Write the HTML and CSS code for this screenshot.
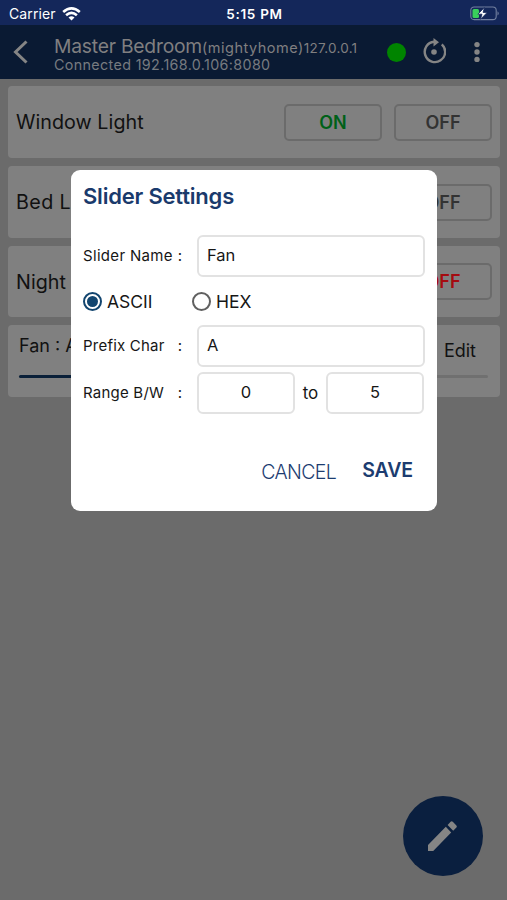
FILE: index.html
```html
<!DOCTYPE html>
<html lang="en">
<head>
<meta charset="utf-8">
<title>Master Bedroom</title>
<link rel="stylesheet" href="styles.css">
</head>
<body>
<div class="screen">
  <div class="status">
    <div class="carrier"><span>Carrier</span>
      <svg width="19" height="14" viewBox="0 0 19 14" fill="none" stroke="#fff" stroke-width="2.6"><path d="M1.2 5.1Q9.5-2.2 17.8 5.1M4.1 8.3Q9.5 3.6 14.9 8.3"/><path d="M6.5 10.6Q9.5 8.1 12.5 10.6L9.5 13.6Z" fill="#fff" stroke="none"/></svg>
    </div>
    <div class="clock">5:15 PM</div>
    <svg class="battery" width="31" height="15" viewBox="0 0 31 15"><rect x="1.8" y="1" width="25.4" height="12.6" rx="3.4" fill="none" stroke="#7380a0" stroke-width="1.1"/><rect x="3.5" y="3" width="6.5" height="9" rx="1.5" fill="#39cf5b"/><path d="M28.5 5.2Q31 7.4 28.5 9.6Z" fill="#7380a0"/><path d="M15.4 1.5L8.9 8.2H13L11.5 13.3L18.2 6.4H14.1Z" fill="#fff" stroke="#14275a" stroke-width=".8"/></svg>
  </div>
  <header class="header">
    <svg class="back" width="16" height="26" viewBox="0 0 16 26" fill="none" stroke="#858585" stroke-width="3"><path d="M13.5 2.5L2.5 13L13.5 23.5"/></svg>
    <div class="heading">
      <div class="room"><span class="name">Master Bedroom</span><span class="home">(mightyhome)</span><span class="ip">127.0.0.1</span></div>
      <div class="connection">Connected 192.168.0.106:8080</div>
    </div>
    <span class="online"></span>
    <svg class="reload" width="24" height="26" viewBox="0 0 24 26"><path d="M19.8 6.3A10.2 10.2 0 1 1 12 3.7" fill="none" stroke="#858585" stroke-width="2.4"/><path d="M11.5 0L17 4.2L11.5 8.4Z" fill="#858585"/><circle cx="12" cy="14" r="2.8" fill="#858585"/></svg>
    <svg class="more" width="6" height="22" viewBox="0 0 6 22" fill="#858585"><circle cx="3" cy="3.6" r="2.7"/><circle cx="3" cy="11" r="2.7"/><circle cx="3" cy="18.4" r="2.7"/></svg>
  </header>
  <main class="devices">
    <section class="card"><span class="device">Window Light</span><button class="switch on">ON</button><button class="switch">OFF</button></section>
    <section class="card"><span class="device bed">Bed Light</span><button class="switch">ON</button><button class="switch">OFF</button></section>
    <section class="card"><span class="device">Night Light</span><button class="switch">ON</button><button class="switch off">OFF</button></section>
    <section class="card slider">
      <div class="slider-head"><span class="slider-name">Fan : A</span><span class="edit">Edit</span></div>
      <div class="track"><div class="fill"></div></div>
    </section>
  </main>
  <div class="fab"><svg width="32" height="32" viewBox="0 0 32 32" fill="#858585"><path d="M1 31V25L18.8 6.8L24.2 12.4L6.2 31ZM20.6 5L23.6 1.8Q24.6 .8 25.8 1.8L29.4 5.4Q30.4 6.6 29.4 7.6L26.2 10.8Z"/></svg></div>
  <div class="dialog">
    <h1 class="title">Slider Settings</h1>
    <div class="row"><div class="label"><span class="l1">Slider Name</span><span>:</span></div><div class="field">Fan</div></div>
    <div class="radios">
      <span class="radio checked"></span><span class="ascii">ASCII</span><span class="radio second"></span><span class="hex">HEX</span>
    </div>
    <div class="row"><div class="label"><span class="l2">Prefix Char</span><span>:</span></div><div class="field">A</div></div>
    <div class="row range"><div class="label"><span class="l3">Range B/W</span><span>:</span></div><div class="field number">0</div><span class="to">to</span><div class="field number">5</div></div>
    <div class="actions"><span class="cancel">CANCEL</span><span class="save">SAVE</span></div>
  </div>
</div>
</body>
</html>
```
FILE: styles.css
```css
* { box-sizing: border-box; }
body { margin: 0; font-family: Inter, sans-serif; color: #111; }
.screen { position: relative; width: 507px; height: 900px; background: #6b6b6b; overflow: hidden; white-space: nowrap; }
.status { height: 25px; background: #14275a; color: #fff; display: grid; grid-template-columns: 1fr auto 1fr; align-items: center; padding: 2px 7px 0 9px; font-size: 14px; }
.carrier { display: flex; align-items: center; gap: 6px; letter-spacing: .1px; }
.clock { font-weight: 600; font-size: 13.5px; letter-spacing: .7px; }
.battery { justify-self: end; }
.header { height: 54px; background: #0a1a33; color: #777b80; display: flex; align-items: center; padding: 0 27px 0 13px; }
.heading { margin-left: 25px; width: 333px; flex: none; padding-top: 5px; }
.room { display: flex; align-items: baseline; height: 20px; line-height: 20px; color: #807f80; }
.name { font-size: 19.3px; letter-spacing: -.22px; }
.home { font-size: 14.5px; letter-spacing: .5px; }
.ip { font-size: 13.5px; letter-spacing: .25px; }
.connection { font-size: 14.3px; line-height: 18px; letter-spacing: .36px; }
.online { width: 19px; height: 19px; border-radius: 50%; background: #008400; flex: none; }
.reload { margin-left: 16px; margin-top: -3px; flex: none; }
.more { margin-left: 28px; flex: none; }
.devices { padding: 7px 7px 0 8px; display: flex; flex-direction: column; gap: 8px; }
.card { height: 71.8px; border-radius: 4px; background: #808080; display: flex; align-items: center; gap: 12px; padding: 1px 8px 0; }
.device { flex: 1; font-size: 19.7px; letter-spacing: .06px; }
.device.bed { letter-spacing: .4px; }
.switch { width: 98px; height: 37px; border: 2px solid #6b6b6b; border-radius: 5px; background: transparent; color: #333; font: 600 18px Inter, sans-serif; padding: 0; }
.switch.on { color: #006018; }
.switch.off { color: #a50b10; }
.card.slider { flex-direction: column; align-items: stretch; gap: 0; padding: 10px 12px 10px 11px; }
.slider-head { display: flex; justify-content: space-between; font-size: 18px; line-height: 22px; }
.edit { padding: 5px 12px 0 0; }
.track { height: 3px; background: #707070; margin-top: 13px; border-radius: 2px; }
.fill { width: 30%; height: 3px; background: #0a2039; border-radius: 2px; }
.fab { position: absolute; left: 403px; top: 796px; width: 80px; height: 80px; border-radius: 50%; background: #0a1f3f; display: flex; align-items: center; justify-content: center; }
.dialog { position: absolute; left: 71px; top: 170px; width: 366px; height: 341px; border-radius: 9px; background: #fff; padding: 12px; color: #161616; }
.title { margin: 0; height: 53px; line-height: 28px; font-size: 22px; letter-spacing: -.2px; font-weight: 600; color: #1a3a6c; }
.row { display: flex; align-items: center; }
.label { width: 114px; padding: 0 15px 1px 0; display: flex; justify-content: space-between; font-size: 15px; }
.l1 { letter-spacing: .32px; }
.l2, .l3 { letter-spacing: .22px; }
.field { flex: 1; height: 42px; border: 2px solid #e2e2e2; border-radius: 6px; padding: 0 8px 2px; display: flex; align-items: center; font-size: 16.5px; }
.radios { height: 48px; display: flex; align-items: center; padding-top: 1px; font-size: 17.5px; }
.radio { width: 19px; height: 19px; border: 2px solid #606060; border-radius: 50%; display: flex; align-items: center; justify-content: center; margin-right: 5px; }
.radio.checked { border-color: #12456f; }
.radio.checked::after { content: ""; width: 11px; height: 11px; border-radius: 50%; background: #12456f; }
.ascii { width: 85px; }
.range { margin-top: 5px; }
.number { flex: 0 0 98px; justify-content: center; }
.to { width: 31px; text-align: center; font-size: 17px; }
.actions { display: flex; justify-content: flex-end; gap: 26px; padding: 42px 12px 0 0; line-height: 28px; font-size: 19.5px; color: #1c3c70; }
.cancel { padding-top: 2px; font-weight: 300; letter-spacing: -.6px; }
.save { font-weight: 600; letter-spacing: -.1px; }
```
